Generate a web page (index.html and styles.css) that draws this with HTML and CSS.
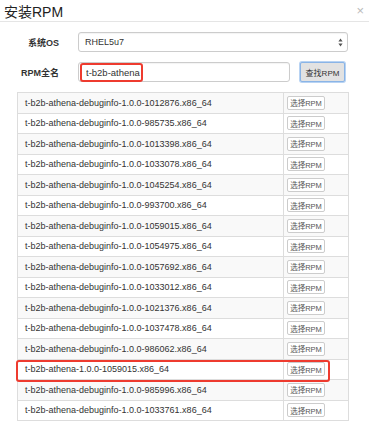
FILE: index.html
```html
<!DOCTYPE html>
<html lang="zh-CN">
<head>
    <meta charset="UTF-8">
    <title>安装RPM</title>
    <link rel="stylesheet" href="styles.css">
</head>
<body>
    <div class="modal">
        <div class="modal-header">
            <h4>安装RPM</h4>
            <span class="close">&times;</span>
        </div>
        <div class="modal-body">
            <div class="form-row">
                <label>系统OS</label>
                <div class="select">
                    <span>RHEL5u7</span>
                    <span class="arrows">
                        <svg width="5" height="9" viewBox="0 0 5 9"><path d="M2.5 0.5 L4.6 3.4 H0.4 Z M2.5 8.5 L4.6 5.6 H0.4 Z" fill="#555"/></svg>
                    </span>
                </div>
            </div>
            <div class="form-row">
                <label>RPM全名</label>
                <div class="search">
                    <div class="input">
                        <input type="text" value="t-b2b-athena">
                        <span class="mark mark-input"></span>
                    </div>
                    <button class="btn-find">查找RPM</button>
                </div>
            </div>
            <table class="rpm-table">
                <tbody>
                    <tr><td>t-b2b-athena-debuginfo-1.0.0-1012876.x86_64</td><td><button class="btn-pick">选择RPM</button></td></tr>
                    <tr><td>t-b2b-athena-debuginfo-1.0.0-985735.x86_64</td><td><button class="btn-pick">选择RPM</button></td></tr>
                    <tr><td>t-b2b-athena-debuginfo-1.0.0-1013398.x86_64</td><td><button class="btn-pick">选择RPM</button></td></tr>
                    <tr><td>t-b2b-athena-debuginfo-1.0.0-1033078.x86_64</td><td><button class="btn-pick">选择RPM</button></td></tr>
                    <tr><td>t-b2b-athena-debuginfo-1.0.0-1045254.x86_64</td><td><button class="btn-pick">选择RPM</button></td></tr>
                    <tr><td>t-b2b-athena-debuginfo-1.0.0-993700.x86_64</td><td><button class="btn-pick">选择RPM</button></td></tr>
                    <tr><td>t-b2b-athena-debuginfo-1.0.0-1059015.x86_64</td><td><button class="btn-pick">选择RPM</button></td></tr>
                    <tr><td>t-b2b-athena-debuginfo-1.0.0-1054975.x86_64</td><td><button class="btn-pick">选择RPM</button></td></tr>
                    <tr><td>t-b2b-athena-debuginfo-1.0.0-1057692.x86_64</td><td><button class="btn-pick">选择RPM</button></td></tr>
                    <tr><td>t-b2b-athena-debuginfo-1.0.0-1033012.x86_64</td><td><button class="btn-pick">选择RPM</button></td></tr>
                    <tr><td>t-b2b-athena-debuginfo-1.0.0-1021376.x86_64</td><td><button class="btn-pick">选择RPM</button></td></tr>
                    <tr><td>t-b2b-athena-debuginfo-1.0.0-1037478.x86_64</td><td><button class="btn-pick">选择RPM</button></td></tr>
                    <tr><td>t-b2b-athena-debuginfo-1.0.0-986062.x86_64</td><td><button class="btn-pick">选择RPM</button></td></tr>
                    <tr><td class="marked">t-b2b-athena-1.0.0-1059015.x86_64<span class="mark mark-row"></span></td><td><button class="btn-pick">选择RPM</button></td></tr>
                    <tr><td>t-b2b-athena-debuginfo-1.0.0-985996.x86_64</td><td><button class="btn-pick">选择RPM</button></td></tr>
                    <tr><td>t-b2b-athena-debuginfo-1.0.0-1033761.x86_64</td><td><button class="btn-pick">选择RPM</button></td></tr>
                </tbody>
            </table>
        </div>
    </div>
</body>
</html>
```

FILE: styles.css
```css
body {
    margin: 0;
    font-family: "Liberation Sans", "Noto Sans CJK SC", sans-serif;
    font-size: 9px;
    color: #333;
    background-color: #fff;
}
.modal {
    width: 369px;
}
.modal-header {
    display: flex;
    justify-content: space-between;
    align-items: center;
    height: 21px;
    padding: 0 5px 0 4px;
    border-bottom: 1px solid #e5e5e5;
}
.modal-header h4 {
    margin: 0;
    font-size: 14px;
    font-weight: normal;
    color: #222;
}
.close {
    font-size: 13px;
    color: #bbb;
    line-height: 1;
}
.modal-body {
    padding-top: 10px;
}
.form-row {
    display: grid;
    grid-template-columns: 59px 1fr;
    column-gap: 19px;
    align-items: center;
    margin-bottom: 10px;
    padding-right: 21px;
}
.form-row label {
    text-align: right;
    font-weight: bold;
    font-size: 9px;
    color: #333;
}
.select {
    display: flex;
    justify-content: space-between;
    align-items: center;
    height: 20px;
    box-sizing: border-box;
    padding: 0 4px 0 6px;
    border: 1px solid #ccc;
    border-radius: 3px;
    box-shadow: inset 0 1px 1px rgba(0, 0, 0, 0.05);
}
.arrows {
    display: flex;
}
.search {
    display: flex;
    align-items: center;
    gap: 10px;
}
.input {
    position: relative;
    width: 212px;
}
.input input {
    display: block;
    width: 100%;
    height: 20px;
    box-sizing: border-box;
    padding: 0 7px;
    border: 1px solid #ccc;
    border-radius: 3px;
    font-family: inherit;
    font-size: 9.5px;
    color: #333;
    box-shadow: inset 0 1px 1px rgba(0, 0, 0, 0.05);
}
.btn-find {
    width: 45px;
    height: 20px;
    padding: 0;
    font-family: inherit;
    font-size: 8px;
    color: #333;
    background-color: #e2e2e2;
    border: 1px solid #8ab4e6;
    border-radius: 2px;
    box-shadow: 0 0 0 1px #b8d3f3;
}
.mark {
    position: absolute;
    border: 2px solid #ee3b2f;
    border-radius: 3px;
    pointer-events: none;
}
.mark-input {
    left: 2px;
    top: 1px;
    width: 59px;
    height: 15px;
}
.rpm-table {
    margin-left: 17px;
    width: 332px;
    border-collapse: collapse;
    border: 1px solid #ddd;
}
.rpm-table td {
    height: 20.5px;
    box-sizing: border-box;
    padding: 0 7px;
    border: 1px solid #ddd;
    white-space: nowrap;
}
.rpm-table td:first-child {
    width: 266px;
}
.rpm-table td:last-child {
    padding: 0 3px;
}
.rpm-table tr:nth-child(odd) td {
    background-color: #f9f9f9;
}
.rpm-table td.marked {
    position: relative;
    background-color: #fff;
}
.mark-row {
    left: -2px;
    top: 0;
    width: 310px;
    height: 18px;
}
.btn-pick {
    display: block;
    width: 38px;
    height: 14px;
    padding: 0;
    font-family: inherit;
    font-size: 7.5px;
    color: #555;
    background-color: #fff;
    border: 1px solid #ccc;
    border-radius: 2px;
}
```
